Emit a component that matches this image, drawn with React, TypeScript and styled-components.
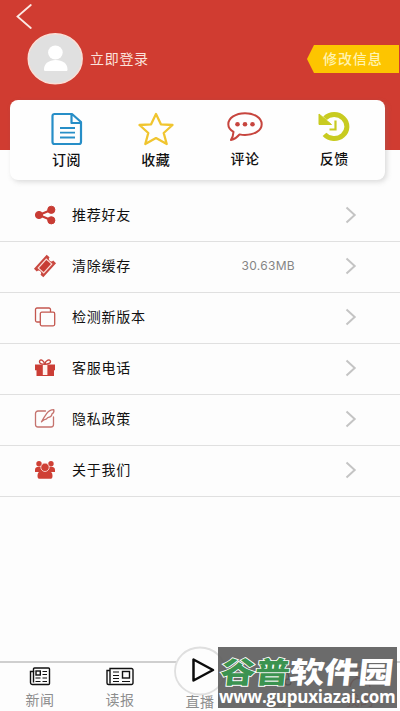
import React from "react";
import styled, { createGlobalStyle } from "styled-components";

const RED = "#d03c31";

const GlobalStyle = createGlobalStyle`
  * { box-sizing: border-box; }
  body {
    margin: 0;
    background: #fdfdfd;
    font-family: "Noto Sans CJK SC", sans-serif;
    color: #111;
  }
`;

const Screen = styled.main`
  width: 400px;
  height: 711px;
  overflow: hidden;
  display: flex;
  flex-direction: column;
  background: #fdfdfd;
`;

const Header = styled.header`
  height: 150px;
  flex: none;
  background: ${RED};
`;

const BackButton = styled.div`
  height: 33px;
  padding: 3px 0 0 15px;
  svg { display: block; }
`;

const Profile = styled.div`
  display: flex;
  align-items: center;
  height: 52px;
  padding-left: 27px;
`;

const Avatar = styled.div`
  width: 56px;
  height: 52px;
  svg { display: block; }
`;

const LoginText = styled.span`
  margin-left: 7px;
  margin-top: -3px;
  flex: 1;
  font-size: 14px;
  line-height: 20px;
  letter-spacing: 0.7px;
  color: #fbe3dd;
`;

const EditTag = styled.div`
  width: 92px;
  height: 28px;
  margin-right: 1px;
  padding-left: 16px;
  font-size: 14px;
  font-weight: 500;
  line-height: 27px;
  letter-spacing: 0.9px;
  color: #fff3b0;
  background: #fdc500;
  clip-path: polygon(0 50%, 7px 0, 100% 0, 100% 100%, 7px 100%);
`;

const Card = styled.nav`
  flex: none;
  width: 375px;
  height: 80px;
  margin: -50px 0 11px 10px;
  padding: 11px 6px 0 12px;
  display: grid;
  grid-template-columns: repeat(4, 1fr);
  background: #fefefe;
  border-radius: 8px;
  box-shadow: 2px 2px 5px rgba(120, 120, 120, 0.25);
  z-index: 1;
`;

const Shortcut = styled.div<{ $lift?: boolean }>`
  display: flex;
  flex-direction: column;
  align-items: center;
  padding-top: ${(p) => (p.$lift ? 0 : 1)}px;
  font-size: 14px;
  font-weight: 500;
  line-height: 20px;
  letter-spacing: 0.6px;
  svg { display: block; margin-bottom: 3px; }
`;

const Row = styled.div`
  height: 51px;
  flex: none;
  display: flex;
  align-items: center;
  padding: 0 43px 3px 33px;
  border-bottom: 1px solid #e0e0e0;
`;

const RowIcon = styled.span`
  width: 24px;
  height: 24px;
  margin-right: 15px;
  svg { display: block; }
`;

const RowLabel = styled.span`
  flex: 1;
  margin-top: -2px;
  font-size: 14px;
  line-height: 20px;
  letter-spacing: 0.75px;
  color: #111;
`;

const RowValue = styled.span`
  margin-right: 50px;
  font-family: Inter, sans-serif;
  font-size: 12px;
  letter-spacing: 0.3px;
  color: #858585;
`;

const Spacer = styled.div`
  flex: 1;
`;

const TabBar = styled.footer`
  position: relative;
  height: 50px;
  flex: none;
  display: grid;
  grid-template-columns: repeat(5, 80px);
  border-top: 2px solid #cfcfcf;
`;

const Tab = styled.div<{ $active?: boolean }>`
  display: flex;
  flex-direction: column;
  align-items: center;
  padding-top: 3px;
  font-size: 14px;
  line-height: 20px;
  letter-spacing: 0.5px;
  color: ${(p) => (p.$active ? RED : "#8d8d8d")};
  svg { display: block; margin-bottom: 1px; }
`;

const PlayTab = styled(Tab)`
  padding-top: 0;
  svg { margin-top: -17px; margin-bottom: -5px; flex: none; }
`;

const Watermark = styled.div`
  position: absolute;
  left: 218px;
  top: -16px;
  width: 179px;
  height: 61px;
  background: rgba(92, 92, 92, 0.91);
  color: #fff;
`;

const WatermarkName = styled.div`
  height: 42px;
  padding: 3px 0 0 3px;
  font-size: 35px;
  font-weight: 900;
  line-height: 42px;
  letter-spacing: -0.5px;
  white-space: nowrap;
  transform: skewX(-6deg) scaleY(0.84);
`;

const GreenPart = styled.span`
  color: #3b9350;
  -webkit-text-stroke: 2px #fff;
  paint-order: stroke fill;
`;

const WatermarkUrl = styled.div`
  margin-top: -2px;
  padding-left: 1px;
  font-family: "Open Sans", sans-serif;
  font-size: 17px;
  font-weight: 700;
  line-height: 20px;
  white-space: nowrap;
  letter-spacing: -0.25px;
`;

const icons = {
  document: (
    <svg width="32" height="34" viewBox="0 0 32 34" fill="none" stroke="#278ec7" strokeWidth="2.2" strokeLinejoin="round">
      <path d="M3.5 2H21l9 8v20a2 2 0 0 1-2 2H3.5a2 2 0 0 1-2-2V4a2 2 0 0 1 2-2ZM20.5 2v9H30" />
      <path d="M9 16h15M9 20.7h15M9 25.5h15" strokeWidth="1.8" />
    </svg>
  ),
  star: (
    <svg width="36" height="34" viewBox="0 0 36 34" fill="none" stroke="#f0c52f" strokeWidth="2.3" strokeLinejoin="round">
      <path d="m18 2 4.9 10.3L34.5 13l-8.8 8 3 11L18 26.1 7.3 32l3-11-8.8-8 11.6-.7Z" />
    </svg>
  ),
  comment: (
    <svg width="38" height="34" viewBox="0 0 38 34">
      <path d="M19 2.2c9.5 0 16.7 4.8 16.7 11S28.5 24 19 24c-1.9 0-3.7-.2-5.4-.6-2.3 2.8-5 4.8-8.7 5.7 1.6-2.4 2.4-5 2.6-8.2-3.3-2-5.2-4.6-5.2-7.7 0-6.2 7.2-11 16.7-11Z" fill="none" stroke="#c7453e" strokeWidth="2" strokeLinejoin="round" />
      <g fill="#c7453e"><circle cx="11.5" cy="13.2" r="2.3" /><circle cx="19" cy="13.2" r="2.3" /><circle cx="26.5" cy="13.2" r="2.3" /></g>
    </svg>
  ),
  history: (
    <svg width="34" height="34" viewBox="0 0 34 34">
      <path d="M8 7.3A12.7 12 0 1 1 7.5 23.3" fill="none" stroke="#c8cb20" strokeWidth="5" />
      <path d="M2 3v10.5h12.5Z" fill="#c8cb20" stroke="#c8cb20" />
      <path d="M18.5 9.5v9h-6" fill="none" stroke="#c8cb20" strokeWidth="2.2" />
    </svg>
  ),
  share: (
    <svg width="24" height="24" viewBox="0 0 24 24" fill="#c83c34" stroke="#c83c34">
      <path d="M18.5 6.8 6 12l12.5 5.2" fill="none" strokeWidth="2.2" />
      <circle cx="6" cy="12" r="3.6" /><circle cx="18.3" cy="6.8" r="3.6" /><circle cx="18.3" cy="17.3" r="3.6" />
    </svg>
  ),
  ticket: (
    <svg width="24" height="24" viewBox="0 0 24 24">
      <g transform="rotate(-48 12 12)">
        <path d="M2.5 5.7h19v3.8a2.5 2.5 0 0 0 0 5v3.8h-19v-3.8a2.5 2.5 0 0 0 0-5Z" fill="#c94840" />
        <path d="M6 8.3h12v7.4H6Z" fill="#c83c34" stroke="#fbdcd7" strokeWidth="1.2" />
      </g>
    </svg>
  ),
  copy: (
    <svg width="24" height="24" viewBox="0 0 24 24" fill="none" stroke="#c4574f" strokeWidth="1.3">
      <rect x="7.3" y="7.2" width="14.4" height="13.6" rx="1.5" />
      <path d="M17.5 7V4.5a1.5 1.5 0 0 0-1.5-1.5H4A1.5 1.5 0 0 0 2.5 4.5v11A1.5 1.5 0 0 0 4 17h3" />
    </svg>
  ),
  gift: (
    <svg width="24" height="24" viewBox="0 0 24 24">
      <path d="M2 8.5h20v5.8h-1V20H3.5v-5.7H2Z" fill="#cb3e36" />
      <path d="M9.8 8.5h4.6V19H9.8Z" fill="#fff1ed" />
      <path d="M11.7 8.4C8 8.3 6.2 7.1 6.5 5.3c.4-2.4 4.2-1.7 5.2 3.1 1-4.8 5.4-5.5 5.8-3.1.3 1.8-2.1 3-5.8 3.1Z" fill="none" stroke="#c6453e" strokeWidth="1.4" />
    </svg>
  ),
  edit: (
    <svg width="24" height="24" viewBox="0 0 24 24" fill="none" stroke="#c5736e" strokeWidth="1.3" strokeLinecap="round" strokeLinejoin="round">
      <path d="M12.5 4H5a2.5 2.5 0 0 0-2.5 2.5v11A2.5 2.5 0 0 0 5 20h13a2.5 2.5 0 0 0 2.5-2.5V10" />
      <path d="M8.5 14.8c1.7-3 3.2-5.6 5.3-8.4 1.8-2.4 4-3.6 7-3.7.5 2-.2 3.5-2 4.4.4 1.8-1.7 3.1-4 3.5-.6 1.4-2 2-3.8 2.2Z" />
    </svg>
  ),
  group: (
    <svg width="24" height="24" viewBox="0 0 24 24" fill="#cf4035">
      <circle cx="6" cy="5.8" r="2.7" /><circle cx="18" cy="5.8" r="2.7" />
      <path d="M2 14v-2c0-2.2 1.4-3.2 4-3.2h12c2.6 0 4 1 4 3.2v2h-5v-1H7v1Z" />
      <path d="M4.5 18c0-3.8 2.1-5.2 4.8-5.5h5.4c2.7.3 4.8 1.7 4.8 5.5 0 2-.8 2.8-2.5 2.8H7c-1.7 0-2.5-.8-2.5-2.8Z" />
      <circle cx="12" cy="9.3" r="4.2" stroke="#fdece8" strokeWidth=".8" />
    </svg>
  ),
};

const Chevron = () => (
  <svg width="12" height="18" viewBox="0 0 12 18" fill="none" stroke="#c4c4c4" strokeWidth="2">
    <path d="m1.5 1.5 8.2 7.4-8.2 7.6" />
  </svg>
);

const shortcuts = [
  { label: "订阅", icon: icons.document, lift: false },
  { label: "收藏", icon: icons.star, lift: false },
  { label: "评论", icon: icons.comment, lift: true },
  { label: "反馈", icon: icons.history, lift: true },
];

const rows = [
  { label: "推荐好友", icon: icons.share },
  { label: "清除缓存", icon: icons.ticket, value: "30.63MB" },
  { label: "检测新版本", icon: icons.copy },
  { label: "客服电话", icon: icons.gift },
  { label: "隐私政策", icon: icons.edit },
  { label: "关于我们", icon: icons.group },
];

export default function App() {
  return (
    <>
      <GlobalStyle />
      <Screen>
        <Header>
          <BackButton>
            <svg width="20" height="28" viewBox="0 0 20 28" fill="none" stroke="#fbe9e4" strokeWidth="1.8" strokeLinecap="round">
              <path d="M15.8 2 2.5 13.5 15.8 25" />
            </svg>
          </BackButton>
          <Profile>
            <Avatar>
              <svg width="56" height="52" viewBox="0 0 56 52">
                <ellipse cx="28.2" cy="25.8" rx="27" ry="25" fill="#e0e0e0" stroke="#fbdfd6" strokeWidth="1.4" />
                <ellipse cx="28.4" cy="19.5" rx="7.3" ry="7" fill="#fff" />
                <path d="M17 36.5c0-6 5-9.4 11.7-9.4s11.8 3.4 11.8 9.4c0 1-.5 1.5-1.5 1.5H18.5c-1 0-1.5-.5-1.5-1.5Z" fill="#fff" />
              </svg>
            </Avatar>
            <LoginText>立即登录</LoginText>
            <EditTag>修改信息</EditTag>
          </Profile>
        </Header>
        <Card>
          {shortcuts.map((s) => (
            <Shortcut key={s.label} $lift={s.lift}>
              {s.icon}
              {s.label}
            </Shortcut>
          ))}
        </Card>
        {rows.map((r) => (
          <Row key={r.label}>
            <RowIcon>{r.icon}</RowIcon>
            <RowLabel>{r.label}</RowLabel>
            {r.value && <RowValue>{r.value}</RowValue>}
            <Chevron />
          </Row>
        ))}
        <Spacer />
        <TabBar>
          <Tab>
            <svg width="22" height="22" viewBox="0 0 22 22" fill="none" stroke="#111" strokeWidth="1.4">
              <path d="M4.5 4V3a1 1 0 0 1 1-1h14a1 1 0 0 1 1 1v14.500a1 1 0 0 1-1 1h-16a2 2 0 0 1-2-2v-11h3v11" />
              <path d="M4.500 4v2" />
              <rect x="7" y="5" width="4.300" height="4" />
              <path d="M13.500 5.500H18M13.500 8.500H18M6.500 12h5M13.500 12H18M6.500 15.500h5M13.500 15.500H18" strokeWidth="1.1" />
            </svg>
            新闻
          </Tab>
          <Tab>
            <svg width="30" height="22" viewBox="0 0 30 22" fill="none" stroke="#111" strokeWidth="1.4">
              <path d="M5 5V2.500h21.500a1.500 1.500 0 0 1 1.500 1.500v13a1.500 1.500 0 0 1-1.500 1.500h-23A1.500 1.500 0 0 1 2 17V4.500h3v13" />
              <rect x="17.500" y="5.500" width="7" height="6.500" />
              <path d="M8 6h6M8 9.500h6M8 12.500h6M8 15.500h6M17 15.500h8" strokeWidth="1.1" />
            </svg>
            读报
          </Tab>
          <PlayTab>
            <svg width="52" height="50" viewBox="0 0 52 50">
              <ellipse cx="26" cy="25" rx="25" ry="23.500" fill="#fdfdfd" stroke="#dfdfdf" strokeWidth="1.8" />
              <path d="M19.500 13.500v21L39 24Z" fill="none" stroke="#0b0b0b" strokeWidth="2.500" strokeLinejoin="round" />
            </svg>
            直播
          </PlayTab>
          <Tab>
            <svg width="26" height="22" viewBox="0 0 26 22" fill="none" stroke="#111" strokeWidth="1.4">
              <path d="M4 12a9 9 0 0 1 18 0" />
              <circle cx="5" cy="16" r="3" /><circle cx="21" cy="16" r="3" />
              <path d="M9 19c3 2 5 2 8 0" />
            </svg>
            服务
          </Tab>
          <Tab $active>
            <svg width="26" height="22" viewBox="0 0 26 22" fill="none" stroke={RED} strokeWidth="1.4">
              <circle cx="13" cy="7" r="5" />
              <path d="M3 21c1-6 5-9 10-9s9 3 10 9" />
            </svg>
            我的
          </Tab>
          <Watermark>
            <WatermarkName>
              <GreenPart>谷普</GreenPart>软件园
            </WatermarkName>
            <WatermarkUrl>www.gupuxiazai.com</WatermarkUrl>
          </Watermark>
        </TabBar>
      </Screen>
    </>
  );
}
